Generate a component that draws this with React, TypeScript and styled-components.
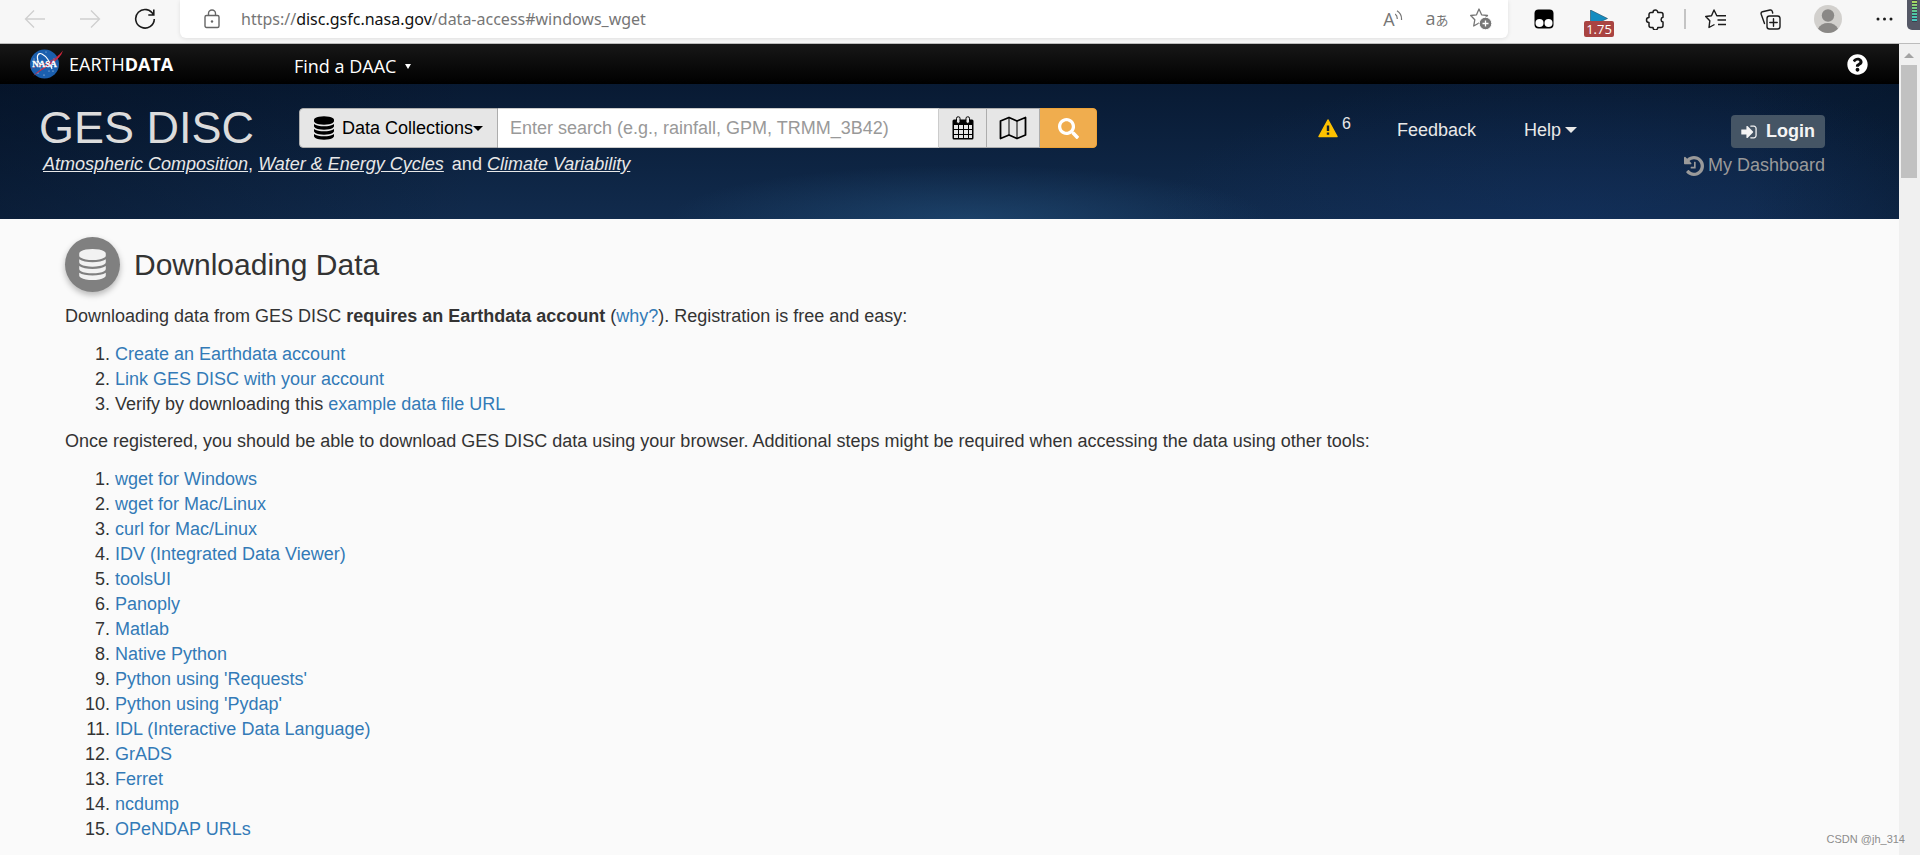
import React from "react";
import styled, { createGlobalStyle } from "styled-components";
import { FaQuestionCircle, FaSearch } from "react-icons/fa";

const sans = `"Liberation Sans", Arial, sans-serif`;
const humanist = `"Open Sans", "Noto Sans", sans-serif`;

const GlobalStyle = createGlobalStyle`
  *, *::before, *::after { box-sizing: border-box; }
  html, body { margin: 0; padding: 0; }
  body { background: #fafafa; color: #333; font: 18px/25px ${sans}; }
  button, input { font: inherit; color: inherit; }
  button { cursor: pointer; }
  svg { display: block; flex: none; }
`;

const Page = styled.div`
  position: relative;
  display: flex;
  flex-direction: column;
  min-height: 100vh;
`;

/* ---------- browser toolbar ---------- */

const BrowserBar = styled.div`
  display: flex;
  align-items: flex-start;
  height: 44px;
  background: #f7f7f7;
  border-bottom: 1px solid #bcbcbc;
`;

const NavButtons = styled.div`
  display: flex;
  align-items: center;
  gap: 33px;
  height: 37px;
  padding: 0 24px;
`;

const IconButton = styled.button<{ $size?: number; $color?: string }>`
  display: flex;
  align-items: center;
  justify-content: center;
  flex: none;
  width: ${(p) => p.$size ?? 22}px;
  height: 28px;
  padding: 0;
  border: 0;
  background: none;
  color: ${(p) => p.$color ?? "#1b1b1b"};
`;

const AddressBar = styled.div`
  display: flex;
  align-items: center;
  flex: 1;
  height: 38px;
  padding: 0 16px 0 24px;
  border-radius: 0 0 6px 6px;
  background: #fff;
  box-shadow: 0 1px 4px rgba(0, 0, 0, 0.1);
`;

const Url = styled.div`
  flex: 1;
  padding-left: 21px;
  font-family: "Noto Sans", sans-serif;
  font-size: 16px;
  color: #767676;
  white-space: nowrap;
`;

const UrlHost = styled.span`
  color: #111;
`;

const AddressActions = styled.div`
  display: flex;
  align-items: center;
  gap: 22px;
`;

const Glyph = styled.span`
  font: 18px/22px "Open Sans", "Noto Sans CJK JP", sans-serif;
  color: #767676;
  white-space: nowrap;
`;

const SmallGlyph = styled.span`
  font: 13px/22px "Noto Sans CJK JP", sans-serif;
`;

const Extensions = styled.div`
  display: flex;
  align-items: center;
  height: 38px;
  padding-left: 26px;
`;

const ExtensionSlot = styled.div<{ $width: number }>`
  display: flex;
  align-items: center;
  width: ${(p) => p.$width}px;
`;

const SpeedButton = styled.button`
  position: relative;
  display: flex;
  align-items: flex-start;
  width: 30px;
  height: 38px;
  padding: 10px 6px 0;
  border: 0;
  background: none;
`;

const SpeedBadge = styled.span`
  position: absolute;
  left: 0;
  top: 21px;
  width: 30px;
  border-radius: 2px;
  background: #a94442;
  color: #fff;
  font: 13px/16px ${humanist};
  text-align: center;
`;

const Divider = styled.span`
  width: 2px;
  height: 20px;
  background: #c4c4c4;
`;

const Meter = styled.div`
  width: 13px;
  height: 30px;
  padding: 0 3px 0 5px;
  border-radius: 0 0 0 5px;
  background: #555866;
`;

const MeterBars = styled.div`
  height: 22px;
  background: repeating-linear-gradient(#3a3f4c 0 1px, transparent 1px 3px),
    linear-gradient(#b6d957, #4fc7a0 60%, #45c8c8);
`;

/* ---------- web page ---------- */

const Viewport = styled.div`
  display: flex;
  flex: 1;
`;

const Document = styled.div`
  flex: 1;
  min-width: 0;
`;

const ScrollTrack = styled.div`
  width: 21px;
  padding: 9px 3px 0 2px;
  background: #f0f0f0;
`;

const ScrollArrow = styled.div`
  width: 0;
  margin: 0 auto 7px;
  border: 5px solid transparent;
  border-top-width: 0;
  border-bottom-color: #a3a3a3;
`;

const ScrollThumb = styled.div`
  height: 113px;
  background: #c1c1c1;
`;

const EarthdataBar = styled.div`
  display: flex;
  align-items: center;
  height: 40px;
  padding: 0 31px 0 29px;
  background: linear-gradient(#171717, #000);
  color: #fff;
  font-family: ${humanist};
`;

const EarthdataLink = styled.a`
  display: flex;
  align-items: center;
  gap: 6px;
  width: 265px;
  color: inherit;
  text-decoration: none;
`;

const DaacButton = styled.button`
  display: flex;
  align-items: center;
  gap: 9px;
  padding: 4px 0 0;
  border: 0;
  background: none;
`;

const Caret = styled.span<{ $half: number; $height: number }>`
  border: ${(p) => p.$half}px solid transparent;
  border-top: ${(p) => p.$height}px solid currentColor;
  border-bottom: 0;
`;

const HelpCircle = styled.button`
  margin-left: auto;
  padding: 0;
  border: 0;
  background: none;
`;

const SiteHeader = styled.header`
  display: flex;
  align-items: flex-start;
  height: 135px;
  padding: 24px 74px 0 39px;
  color: #e8e8e8;
  background:
    radial-gradient(ellipse 300px 54px at 51% 100%, rgba(42, 92, 138, 0.45), transparent),
    radial-gradient(ellipse 420px 150px at 83% 100%, rgba(20, 52, 104, 0.4), transparent),
    linear-gradient(90deg, rgba(2, 12, 28, 0.4), transparent 25%, transparent 92%, rgba(4, 20, 40, 0.4)),
    linear-gradient(#081a33, #112b4d);
`;

const BrandArea = styled.div`
  flex: 0 1 1058px;
`;

const BrandRow = styled.div`
  display: flex;
  height: 40px;
`;

const SiteTitle = styled.a`
  width: 260px;
  flex: none;
  color: #dcdcdc;
  font-size: 45px;
  line-height: 40px;
  text-decoration: none;
`;

const Tagline = styled.div`
  display: flex;
  gap: 8px;
  margin: 4px 0 0 4px;
  white-space: nowrap;
`;

const TaglineLink = styled.a`
  color: inherit;
  font-style: italic;
`;

const SearchForm = styled.form`
  display: flex;
  flex: 1;
  border-radius: 4px;
  overflow: hidden;
`;

const SearchButton = styled.button<{ $width: number; $primary?: boolean }>`
  display: flex;
  align-items: center;
  justify-content: center;
  flex: none;
  width: ${(p) => p.$width}px;
  height: 40px;
  padding: 0;
  border: 1px solid ${(p) => (p.$primary ? "#eea236" : "#adadad")};
  border-left-width: ${(p) => (p.$width > 100 ? 1 : 0)}px;
  border-radius: ${(p) => (p.$width > 100 ? "4px 0 0 4px" : p.$primary ? "0 4px 4px 0" : "0")};
  background: ${(p) => (p.$primary ? "#f0ad4e" : "#e6e6e6")};
  color: ${(p) => (p.$primary ? "#fff" : "#000")};
`;

const CollectionLabel = styled.span`
  margin-left: 8px;
`;

const SearchInput = styled.input`
  flex: 1;
  min-width: 0;
  height: 40px;
  padding: 0 12px;
  border: 1px solid #ccc;
  border-left: 0;
  border-radius: 0;
  background: #fff;
  color: #333;
  &::placeholder { color: #999; opacity: 1; }
`;

const HeaderNav = styled.nav`
  display: flex;
  align-items: center;
  height: 44px;
  margin-left: auto;
`;

const HeaderButton = styled.button<{ $space: number }>`
  display: flex;
  align-items: center;
  gap: 4px;
  margin-right: ${(p) => p.$space}px;
  padding: 0;
  border: 0;
  background: none;
`;

const AlertCount = styled.span`
  padding-bottom: 12px;
  font-size: 16px;
  line-height: 16px;
`;

const Account = styled.div`
  display: flex;
  flex-direction: column;
  align-items: flex-end;
  gap: 5px;
  width: 150px;
  padding-top: 7px;
`;

const LoginButton = styled.button`
  display: flex;
  align-items: center;
  justify-content: center;
  gap: 9px;
  width: 94px;
  height: 33px;
  padding: 0;
  border: 0;
  border-radius: 4px;
  background: #455565;
  color: #f4f4f4;
  font-weight: 700;
`;

const DashboardLink = styled.a`
  display: flex;
  align-items: center;
  gap: 4px;
  color: #9a9a9a;
  text-decoration: none;
  white-space: nowrap;
`;

/* ---------- article ---------- */

const Article = styled.main`
  padding: 18px 65px 0;
`;

const Heading = styled.h1`
  display: flex;
  align-items: center;
  gap: 14px;
  margin: 0 0 12px;
  font-size: 30px;
  line-height: 36px;
  font-weight: 400;
`;

const HeadingBadge = styled.span`
  display: grid;
  place-items: center;
  width: 55px;
  height: 55px;
  border-radius: 50%;
  background: #808080;
  color: #f2f2f2;
  box-shadow: 0 3px 6px rgba(0, 0, 0, 0.28);
`;

const Paragraph = styled.p`
  margin: 0 0 13px;
`;

const Steps = styled.ol`
  margin: 0 0 12px;
  padding-left: 50px;
`;

const TextLink = styled.a`
  color: #337ab7;
  text-decoration: none;
`;

const Watermark = styled.div`
  position: absolute;
  right: 15px;
  bottom: 9px;
  color: #8c8c8c;
  font-size: 11px;
  line-height: 14px;
`;

/* ---------- drawings ---------- */

const DatabaseIcon = ({ width, height }: { width: number; height: number }) => (
  <svg width={width} height={height} viewBox="0 0 1536 1792" fill="currentColor" aria-hidden="true">
    <path d="M768 768q237 0 443-43t325-127v170q0 69-103 128t-280 93.500-385 34.500-385-34.500-280-93.500-103-128v-170q119 84 325 127t443 43zm0 768q237 0 443-43t325-127v170q0 69-103 128t-280 93.500-385 34.500-385-34.500-280-93.500-103-128v-170q119 84 325 127t443 43zm0-384q237 0 443-43t325-127v170q0 69-103 128t-280 93.500-385 34.500-385-34.500-280-93.500-103-128v-170q119 84 325 127t443 43zm0-1152q208 0 385 34.500t280 93.500 103 128v128q0 69-103 128t-280 93.500-385 34.500-385-34.500-280-93.500-103-128v-128q0-69 103-128t280-93.500 385-34.500z" />
  </svg>
);

const SignInIcon = () => (
  <svg width="16" height="18" viewBox="0 0 1536 1792" fill="currentColor" aria-hidden="true">
    <path d="M1184 896q0 26-19 45l-544 544q-19 19-45 19t-45-19-19-45v-288h-448q-26 0-45-19t-19-45v-384q0-26 19-45t45-19h448v-288q0-26 19-45t45-19 45 19l544 544q19 19 19 45z" />
    <path d="M1536 544v704q0 119-84.500 203.500t-203.500 84.500h-320q-32 0-32-32v-64q0-32 32-32h320q66 0 113-47t47-113v-704q0-66-47-113t-113-47h-320q-32 0-32-32v-64q0-32 32-32h320q119 0 203.500 84.500t84.500 203.500z" />
  </svg>
);

const HistoryIcon = () => (
  <svg width="20" height="20" viewBox="0 128 1536 1536" fill="currentColor" aria-hidden="true">
    <path d="M1536 896q0 156-61 298t-164 245-245 164-298 61q-172 0-327-72.500t-264-204.500q-7-10-6.500-22.500t8.500-20.500l137-138q10-9 25-9 16 2 23 12 73 95 179 147t225 52q104 0 198.500-40.500t163.500-109.500 109.500-163.500 40.500-198.500-40.500-198.500-109.500-163.500-163.500-109.500-198.500-40.500q-98 0-188 35.500t-160 101.500l137 138q31 30 14 69-17 40-59 40h-448q-26 0-45-19t-19-45v-448q0-42 40-59 39-17 69 14l130 129q107-101 244.500-156.500t284.500-55.500q156 0 298 61t245 164 164 245 61 298zm-640-288v448q0 14-9 23t-23 9h-320q-14 0-23-9t-9-23v-64q0-14 9-23t23-9h224v-352q0-14 9-23t23-9h64q14 0 23 9t9 23z" />
  </svg>
);

const CalendarIcon = () => (
  <svg width="22" height="24" viewBox="0 0 22 24" aria-hidden="true">
    <path d="M2 3.500h18a1.500 1.500 0 0 1 1.500 1.500v17a1.500 1.500 0 0 1-1.500 1.500H2A1.500 1.500 0 0 1 .5 22V5A1.500 1.500 0 0 1 2 3.500z" fill="#000" />
    <g fill="#e6e6e6">
      {[9, 14, 19].map((y) =>
        [2, 7, 12, 17].map((x) => <rect key={`${x}-${y}`} x={x} y={y} width={x === 17 ? 3 : 4} height={y === 19 ? 3 : 4} />)
      )}
    </g>
    <rect x="4.500" y=".8" width="3.500" height="6.500" rx="1.500" fill="#e6e6e6" stroke="#000" />
    <rect x="14" y=".8" width="3.500" height="6.500" rx="1.500" fill="#e6e6e6" stroke="#000" />
  </svg>
);

const MapIcon = () => (
  <svg width="28" height="24" viewBox="0 0 28 24" fill="none" stroke="#000" strokeLinejoin="round" aria-hidden="true">
    <path d="M1.500 5L10 1.500L18 5L26.500 1.500V19L18 22.500L10 19L1.500 22.500Z" strokeWidth="1.800" />
    <path d="M10 1.500V19M18 5V22.500" strokeWidth="1" />
  </svg>
);

const WarningIcon = () => (
  <svg width="20" height="22" viewBox="0 0 20 22" aria-hidden="true">
    <path d="M10 1L19 17.500H1Z" fill="#fdc100" stroke="#fdc100" strokeWidth="1.500" strokeLinejoin="round" />
    <path d="M10 6.500V12M10 13.500V15.800" stroke="#14212e" strokeWidth="2.400" />
  </svg>
);

const NasaLogo = () => (
  <svg width="34" height="30" viewBox="0 0 34 30" aria-hidden="true">
    <circle cx="15.500" cy="15" r="14.500" fill="#1b5fae" />
    <g fill="#dbe8f5">
      <circle cx="10" cy="5" r=".6" /><circle cx="17" cy="3" r=".5" /><circle cx="5" cy="10" r=".5" />
      <circle cx="9" cy="24" r=".6" /><circle cx="15" cy="26" r=".6" /><circle cx="20" cy="22" r=".5" />
      <circle cx="25" cy="10" r=".5" /><circle cx="12" cy="20" r=".5" /><circle cx="24" cy="22" r=".6" />
    </g>
    <path d="M9 12C7 6 10 3.500 13 5C17 7 21 13 23 20M9 12L12 17" fill="none" stroke="#fff" strokeWidth="1.100" />
    <path d="M.5 20C12 16 26 12 34 1.500C31 12 18 17 4 27C13 18 25 13 29 7C21 15 11 17 .5 20Z" fill="#d9253b" />
    <text x="15.500" y="18" textAnchor="middle" fontFamily="Liberation Serif, serif" fontWeight="700" fontSize="9" fill="#fff" stroke="#fff" strokeWidth=".3">NASA</text>
  </svg>
);

const BackIcon = ({ flip }: { flip?: boolean }) => (
  <svg width="22" height="20" viewBox="0 0 22 20" fill="none" stroke="currentColor" strokeWidth="1.300" aria-hidden="true">
    <path d={flip ? "M1 10H20.500M12 1.500L20.500 10L12 18.500" : "M21 10H1.500M10 1.500L1.500 10L10 18.500"} />
  </svg>
);

const ReloadIcon = () => (
  <svg width="22" height="22" viewBox="0 0 22 22" fill="none" stroke="currentColor" strokeWidth="1.600" aria-hidden="true">
    <path d="M19.500 7A9.300 9.300 0 1 0 20.300 11M19.800 1.500V7H14.300" />
  </svg>
);

const LockIcon = () => (
  <svg width="16" height="20" viewBox="0 0 16 20" fill="none" stroke="#666" strokeWidth="1.400" aria-hidden="true">
    <rect x="1" y="6.500" width="14" height="12" rx="1.500" />
    <path d="M4.500 6.500V4.500A3.500 3.500 0 0 1 11.500 4.500V6.500" />
    <circle cx="8" cy="12.500" r="1.200" fill="#666" stroke="none" />
  </svg>
);

const SoundWaves = () => (
  <svg width="8" height="18" viewBox="0 0 8 18" fill="none" stroke="#767676" strokeWidth="1.200" aria-hidden="true">
    <path d="M0 4Q2.500 5.500 2.200 9M2 .8Q7 4 6.500 10" />
  </svg>
);

const starPath = "M9 1L11.600 6.800L17.500 7.500L13.200 11.800L14.300 18L9 15L3.700 18L4.800 11.800L.7 7.500L6.500 6.800Z";

const StarAddIcon = () => (
  <svg width="22" height="22" viewBox="0 0 22 22" aria-hidden="true">
    <path d={starPath} fill="none" stroke="#767676" strokeWidth="1.300" strokeLinejoin="round" />
    <circle cx="15.500" cy="15.500" r="6.300" fill="#767676" stroke="#fff" />
    <path d="M12.500 15.500H18.500M15.500 12.500V18.500" stroke="#fff" strokeWidth="1.300" />
  </svg>
);

const TamperIcon = () => (
  <svg width="20" height="20" viewBox="0 0 20 20" aria-hidden="true">
    <rect x=".5" y=".5" width="19" height="19" rx="4" fill="#000" />
    <circle cx="5.500" cy="14" r="4" fill="#fff" />
    <circle cx="14.500" cy="14" r="4" fill="#fff" />
  </svg>
);

const PlayIcon = () => (
  <svg width="18" height="12" viewBox="0 0 18 12" aria-hidden="true">
    <path d="M.5 0L17.500 8.500L10 12H.5Z" fill="#138cc0" stroke="#1f4c63" strokeWidth=".6" />
  </svg>
);

const PuzzleIcon = () => (
  <svg width="20" height="21" viewBox="0 0 20 21" fill="none" stroke="currentColor" strokeWidth="1.500" strokeLinejoin="round" aria-hidden="true">
    <path d="M6 3.500H8A2.400 2.400 0 0 1 12.800 3.500H16A2 2 0 0 1 18 5.500V8.300A2.400 2.400 0 0 0 18 13V16.500A2 2 0 0 1 16 18.500H12.800A2.400 2.400 0 0 1 8 18.500H6A2 2 0 0 1 4 16.500V13.500A2.500 2.500 0 0 1 4 8.500V5.500A2 2 0 0 1 6 3.500Z" />
  </svg>
);

const FavoritesIcon = () => (
  <svg width="22" height="20" viewBox="0 0 22 20" fill="none" stroke="currentColor" strokeWidth="1.400" strokeLinejoin="round" aria-hidden="true">
    <path d="M9.500 15.500L4 18.500L4.800 11.800L.7 7.500L6.500 6.800L9 1L11.800 6.800H21M12.500 11H21M13 15.500H21" />
  </svg>
);

const CollectionsIcon = () => (
  <svg width="21" height="21" viewBox="0 0 21 21" fill="none" stroke="currentColor" strokeWidth="1.400" strokeLinecap="round" aria-hidden="true">
    <path d="M4.500 14.500L1.200 5.200A2 2 0 0 1 2.500 2.700L10 1A2 2 0 0 1 12.300 2.400L12.700 4" />
    <rect x="7" y="7" width="13" height="13" rx="2.500" />
    <path d="M13.500 9.800V17.200M9.800 13.500H17.200" />
  </svg>
);

const Avatar = () => (
  <svg width="28" height="28" viewBox="0 0 28 28" aria-hidden="true">
    <circle cx="14" cy="14" r="14" fill="#d2d0cd" />
    <circle cx="14" cy="10.500" r="6.200" fill="#8a8886" />
    <path d="M4 23.800Q7 18 14 18T24 23.800Q20 28 14 28T4 23.800Z" fill="#8a8886" />
  </svg>
);

const DotsIcon = () => (
  <svg width="17" height="4" viewBox="0 0 17 4" fill="currentColor" aria-hidden="true">
    <circle cx="2" cy="2" r="1.500" /><circle cx="8.500" cy="2" r="1.500" /><circle cx="15" cy="2" r="1.500" />
  </svg>
);

/* ---------- data ---------- */

const tools = [
  "wget for Windows",
  "wget for Mac/Linux",
  "curl for Mac/Linux",
  "IDV (Integrated Data Viewer)",
  "toolsUI",
  "Panoply",
  "Matlab",
  "Native Python",
  "Python using 'Requests'",
  "Python using 'Pydap'",
  "IDL (Interactive Data Language)",
  "GrADS",
  "Ferret",
  "ncdump",
  "OPeNDAP URLs",
];

export default function App() {
  return (
    <Page>
      <GlobalStyle />
      <BrowserBar>
        <NavButtons>
          <IconButton aria-label="Back" $color="#cfcfcf"><BackIcon /></IconButton>
          <IconButton aria-label="Forward" $color="#cfcfcf"><BackIcon flip /></IconButton>
          <IconButton aria-label="Refresh"><ReloadIcon /></IconButton>
        </NavButtons>
        <AddressBar>
          <LockIcon />
          <Url>https://<UrlHost>disc.gsfc.nasa.gov</UrlHost>/data-access#windows_wget</Url>
          <AddressActions>
            <IconButton aria-label="Read aloud"><Glyph>A</Glyph><SoundWaves /></IconButton>
            <IconButton aria-label="Translate"><Glyph>a<SmallGlyph>あ</SmallGlyph></Glyph></IconButton>
            <IconButton aria-label="Add to favorites"><StarAddIcon /></IconButton>
          </AddressActions>
        </AddressBar>
        <Extensions>
          <ExtensionSlot $width={50}><IconButton aria-label="Userscripts" $size={20}><TamperIcon /></IconButton></ExtensionSlot>
          <ExtensionSlot $width={61}><SpeedButton aria-label="Playback speed"><PlayIcon /><SpeedBadge>1.75</SpeedBadge></SpeedButton></ExtensionSlot>
          <ExtensionSlot $width={39}><IconButton aria-label="Extensions" $size={20}><PuzzleIcon /></IconButton></ExtensionSlot>
          <ExtensionSlot $width={21}><Divider /></ExtensionSlot>
          <ExtensionSlot $width={55}><IconButton aria-label="Favorites"><FavoritesIcon /></IconButton></ExtensionSlot>
          <ExtensionSlot $width={54}><IconButton aria-label="Collections" $size={21}><CollectionsIcon /></IconButton></ExtensionSlot>
          <ExtensionSlot $width={62}><IconButton aria-label="Profile" $size={28}><Avatar /></IconButton></ExtensionSlot>
          <ExtensionSlot $width={31}><IconButton aria-label="More" $size={17}><DotsIcon /></IconButton></ExtensionSlot>
        </Extensions>
        <Meter><MeterBars /></Meter>
      </BrowserBar>

      <Viewport>
        <Document>
          <EarthdataBar>
            <EarthdataLink href="#earthdata"><NasaLogo /><span>EARTH<b>DATA</b></span></EarthdataLink>
            <DaacButton>Find a DAAC<Caret $half={3} $height={5} /></DaacButton>
            <HelpCircle aria-label="Help"><FaQuestionCircle size={21} /></HelpCircle>
          </EarthdataBar>

          <SiteHeader>
            <BrandArea>
              <BrandRow>
                <SiteTitle href="#home">GES DISC</SiteTitle>
                <SearchForm onSubmit={(e) => e.preventDefault()}>
                  <SearchButton type="button" $width={199}>
                    <DatabaseIcon width={20} height={24} />
                    <CollectionLabel>Data Collections</CollectionLabel>
                    <Caret $half={5} $height={5} />
                  </SearchButton>
                  <SearchInput aria-label="Search" placeholder="Enter search (e.g., rainfall, GPM, TRMM_3B42)" />
                  <SearchButton type="button" $width={48} aria-label="Date range"><CalendarIcon /></SearchButton>
                  <SearchButton type="button" $width={53} aria-label="Spatial region"><MapIcon /></SearchButton>
                  <SearchButton type="submit" $width={57} $primary aria-label="Submit search"><FaSearch size={21} /></SearchButton>
                </SearchForm>
              </BrandRow>
              <Tagline>
                <span>
                  <TaglineLink href="#atmosphere">Atmospheric Composition</TaglineLink>,{" "}
                  <TaglineLink href="#water">Water &amp; Energy Cycles</TaglineLink>
                </span>
                <span>and <TaglineLink href="#climate">Climate Variability</TaglineLink></span>
              </Tagline>
            </BrandArea>
            <HeaderNav>
              <HeaderButton $space={46} aria-label="6 alerts"><WarningIcon /><AlertCount>6</AlertCount></HeaderButton>
              <HeaderButton $space={48}>Feedback</HeaderButton>
              <HeaderButton $space={98}>Help<Caret $half={6} $height={6} /></HeaderButton>
            </HeaderNav>
            <Account>
              <LoginButton><SignInIcon />Login</LoginButton>
              <DashboardLink href="#dashboard"><HistoryIcon />My Dashboard</DashboardLink>
            </Account>
          </SiteHeader>

          <Article>
            <Heading><HeadingBadge><DatabaseIcon width={27} height={31} /></HeadingBadge>Downloading Data</Heading>
            <Paragraph>
              Downloading data from GES DISC <b>requires an Earthdata account</b> (<TextLink href="#why">why?</TextLink>). Registration is free and easy:
            </Paragraph>
            <Steps>
              <li><TextLink href="#create">Create an Earthdata account</TextLink></li>
              <li><TextLink href="#link">Link GES DISC with your account</TextLink></li>
              <li>Verify by downloading this <TextLink href="#example">example data file URL</TextLink></li>
            </Steps>
            <Paragraph>
              Once registered, you should be able to download GES DISC data using your browser. Additional steps might be required when accessing the data using other tools:
            </Paragraph>
            <Steps>
              {tools.map((tool) => (
                <li key={tool}><TextLink href="#tool">{tool}</TextLink></li>
              ))}
            </Steps>
          </Article>
        </Document>
        <ScrollTrack>
          <ScrollArrow />
          <ScrollThumb />
        </ScrollTrack>
      </Viewport>
      <Watermark>CSDN @jh_314</Watermark>
    </Page>
  );
}
